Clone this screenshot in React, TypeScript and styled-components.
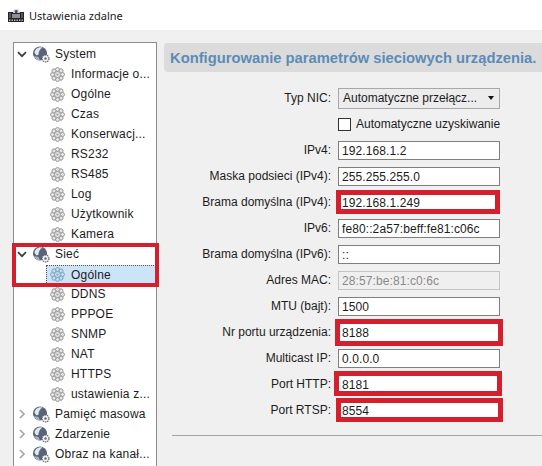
import React from "react";
import styled, { createGlobalStyle } from "styled-components";

const Global = createGlobalStyle`
  html, body { margin: 0; padding: 0; background: #f0f0f0; }
  body { font-family: "Liberation Sans", Arial, sans-serif; font-size: 12px; color: #1c1c1c; }
`;

const RED = "#d3202c";

const Window = styled.div`
  position: relative;
  width: 542px;
  height: 466px;
  overflow: hidden;
  background: #f0f0f0;
`;

const TitleBar = styled.div`
  height: 30px;
  background: #fff;
  display: flex;
  align-items: center;
  gap: 5px;
  padding: 0 0 0 8px;
  font-family: "Noto Sans", sans-serif;
  font-size: 11px;
`;

const Body = styled.div`
  display: flex;
  height: 436px;
  padding: 12px 0 0 13px;
  box-sizing: border-box;
  gap: 7px;
`;

const Tree = styled.div`
  width: 144px;
  height: 430px;
  flex: none;
  box-sizing: border-box;
  background: #fff;
  border: 1px solid #8c8c8c;
  padding: 1px 0 0 0;
  overflow: hidden;
`;

const Row = styled.div<{ $child?: boolean }>`
  height: 20px;
  display: flex;
  align-items: center;
  gap: ${({ $child }) => ($child ? "6px" : "5px")};
  padding-left: ${({ $child }) => ($child ? "36px" : "3px")};
  letter-spacing: 0.2px;
  white-space: nowrap;
`;

const Label = styled.span`
  line-height: 16px;
`;

const SelectedRow = styled.div`
  height: 18px;
  margin: 1px 0 1px 32px;
  padding-left: 3px;
  background: #cce4f7;
  border: 1px dotted #555;
  border-right: none;
  border-bottom: none;
  box-sizing: border-box;
  display: flex;
  align-items: center;
  gap: 6px;
  letter-spacing: 0.2px;
`;

const Chevron = styled.svg`
  width: 10px;
  height: 10px;
  flex: none;
  margin-right: 1px;
  fill: none;
  stroke-width: 1.7;
`;

const Main = styled.div`
  flex: 1;
  min-width: 0;
  display: flex;
  flex-direction: column;
`;

const Header = styled.div`
  height: 29px;
  margin-top: 1px;
  background: #dbdbdb;
  border-radius: 4px 0 0 4px;
  display: flex;
  align-items: center;
  padding-left: 6px;
  font-size: 14.75px;
  font-weight: bold;
  color: #5b8cb8;
  white-space: nowrap;
`;

const Form = styled.div`
  display: grid;
  grid-template-columns: 167px 162px;
  grid-auto-rows: 26px;
  column-gap: 7px;
  align-items: center;
  margin-top: 13px;
`;

const FieldLabel = styled.label`
  text-align: right;
  white-space: nowrap;
`;

const Input = styled.div<{ $disabled?: boolean }>`
  height: 19px;
  box-sizing: border-box;
  border: 1px solid ${({ $disabled }) => ($disabled ? "#c4c4c4" : "#7f7f7f")};
  background: ${({ $disabled }) => ($disabled ? "#efefef" : "#fff")};
  color: ${({ $disabled }) => ($disabled ? "#8a8a8a" : "#1c1c1c")};
  padding-left: 3px;
  line-height: 18px;
  letter-spacing: 0.1px;
  white-space: nowrap;
`;

const Select = styled.div`
  height: 21px;
  box-sizing: border-box;
  border: 1px solid #a8a8a8;
  background: #ececec;
  display: flex;
  align-items: center;
  justify-content: space-between;
  padding: 0 5px 0 4px;
  white-space: nowrap;
`;

const Caret = styled.span`
  width: 0;
  height: 0;
  border-left: 3.5px solid transparent;
  border-right: 3.5px solid transparent;
  border-top: 4px solid #111;
`;

const CheckRow = styled.div`
  grid-column: 2;
  display: flex;
  align-items: center;
  gap: 5px;
  white-space: nowrap;
`;

const CheckBox = styled.span`
  width: 13px;
  height: 13px;
  box-sizing: border-box;
  border: 1px solid #333;
  background: #fff;
  flex: none;
`;

const Divider = styled.div`
  height: 1px;
  background: #a4a4a4;
  margin: 12px 0 0 8px;
`;

const Highlight = styled.div<{ $l: number; $t: number; $w: number; $h: number; $b?: number }>`
  position: absolute;
  left: ${({ $l }) => $l}px;
  top: ${({ $t }) => $t}px;
  width: ${({ $w }) => $w}px;
  height: ${({ $h }) => $h}px;
  box-sizing: border-box;
  border: ${({ $b }) => $b ?? 5}px solid ${RED};
  pointer-events: none;
`;

const AppIcon = () => (
  <svg width="16" height="14" viewBox="0 0 16 14">
    <rect x="0" y="4" width="16" height="10" fill="#26262a" />
    <path d="M5 5 6 1h4.500L12 5z" fill="#d8dade" />
    <circle cx="8.200" cy="3.600" r="1.500" fill="#41444a" />
    <rect x="4" y="6" width="8" height="4" fill="#8c9097" />
    <rect x="1" y="5" width="2" height="5" fill="#55575c" />
    <rect x="13" y="5" width="2" height="5" fill="#55575c" />
    {[1, 3.500, 6, 8.500, 11, 13.500].map((x) => (
      <rect key={x} x={x} y="11.500" width="1.400" height="1.400" fill="#c4c4c4" />
    ))}
  </svg>
);

const GroupIcon = () => (
  <svg width="17" height="17" viewBox="0 0 17 17" style={{ flex: "none" }}>
    <circle cx="7" cy="7.500" r="7" fill="#57657a" />
    <path d="M1.500 6C2.500 2.500 6 .8 9.500 1.500 7 3 5.500 5.500 5.500 8.500 4 10 2 9 1.500 6z" fill="#e3e8ee" />
    <path d="M1 10c1 2.500 3 4.500 6 4.500L5.500 11z" fill="#a7b2bf" />
    <circle cx="12.500" cy="12.500" r="3.500" fill="#f0f1f3" stroke="#5f5f5f" strokeWidth="1.100" strokeDasharray="1.500 0.700" />
    <circle cx="12.500" cy="12.500" r="1.200" fill="#6d6d6d" />
  </svg>
);

const GearIcon = ({ active }: { active?: boolean }) => {
  const c = active ? "#7fa6c6" : "#9c9c9c";
  const f = active ? "#c4dcef" : "#e6e6e6";
  const petals = [0, 45, 90, 135, 180, 225, 270, 315];
  return (
    <svg width="15" height="15" viewBox="0 0 15 15" style={{ flex: "none" }}>
      {petals.map((a) => (
        <circle key={a} cx="7.500" cy="2.500" r="2" fill={f} stroke={c} strokeWidth="1" transform={`rotate(${a} 7.500 7.500)`} />
      ))}
      <circle cx="7.500" cy="7.500" r="3" fill={f} stroke={c} strokeWidth="1" />
      <circle cx="7.500" cy="7.500" r="1.100" fill={c} />
    </svg>
  );
};

const Arrow = ({ open }: { open?: boolean }) => (
  <Chevron viewBox="0 0 10 10" stroke={open ? "#3c3c3c" : "#a6a6a6"}>
    {open ? <path d="M1 3.200 5 7.200 9 3.200" /> : <path d="M3 1 7 5 3 9" />}
  </Chevron>
);

const Group = ({ label, open }: { label: string; open?: boolean }) => (
  <Row>
    <Arrow open={open} />
    <GroupIcon />
    <Label>{label}</Label>
  </Row>
);

const Item = ({ label }: { label: string }) => (
  <Row $child>
    <GearIcon />
    <Label>{label}</Label>
  </Row>
);

const systemItems = ["Informacje o...", "Ogólne", "Czas", "Konserwacj...", "RS232", "RS485", "Log", "Użytkownik", "Kamera"];
const networkItems = ["DDNS", "PPPOE", "SNMP", "NAT", "HTTPS", "ustawienia z..."];

const fields: { label: string; value: string; disabled?: boolean }[] = [
  { label: "IPv4:", value: "192.168.1.2" },
  { label: "Maska podsieci (IPv4):", value: "255.255.255.0" },
  { label: "Brama domyślna (IPv4):", value: "192.168.1.249" },
  { label: "IPv6:", value: "fe80::2a57:beff:fe81:c06c" },
  { label: "Brama domyślna (IPv6):", value: "::" },
  { label: "Adres MAC:", value: "28:57:be:81:c0:6c", disabled: true },
  { label: "MTU (bajt):", value: "1500" },
  { label: "Nr portu urządzenia:", value: "8188" },
  { label: "Multicast IP:", value: "0.0.0.0" },
  { label: "Port HTTP:", value: "8181" },
  { label: "Port RTSP:", value: "8554" },
];

export default function App() {
  return (
    <Window>
      <Global />
      <TitleBar>
        <AppIcon />
        <span>Ustawienia zdalne</span>
      </TitleBar>
      <Body>
        <Tree>
          <Group label="System" open />
          {systemItems.map((s) => (
            <Item key={s} label={s} />
          ))}
          <Group label="Sieć" open />
          <SelectedRow>
            <GearIcon active />
            <Label>Ogólne</Label>
          </SelectedRow>
          {networkItems.map((s) => (
            <Item key={s} label={s} />
          ))}
          <Group label="Pamięć masowa" />
          <Group label="Zdarzenie" />
          <Group label="Obraz na kanał..." />
        </Tree>
        <Main>
          <Header>Konfigurowanie parametrów sieciowych urządzenia.</Header>
          <Form>
            <FieldLabel>Typ NIC:</FieldLabel>
            <Select>
              Automatyczne przełącz...
              <Caret />
            </Select>
            <CheckRow>
              <CheckBox />
              Automatyczne uzyskiwanie
            </CheckRow>
            {fields.map((f) => (
              <React.Fragment key={f.label}>
                <FieldLabel>{f.label}</FieldLabel>
                <Input $disabled={f.disabled}>{f.value}</Input>
              </React.Fragment>
            ))}
          </Form>
          <Divider />
        </Main>
      </Body>
      <Highlight $l={12} $t={243} $w={147} $h={44} $b={4} />
      <Highlight $l={336} $t={190} $w={164} $h={24} />
      <Highlight $l={335} $t={319} $w={168} $h={27} />
      <Highlight $l={334} $t={371} $w={168} $h={25} />
      <Highlight $l={336} $t={398} $w={167} $h={24} />
    </Window>
  );
}
